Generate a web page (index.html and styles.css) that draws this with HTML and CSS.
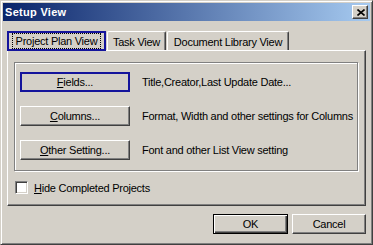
FILE: index.html
```html
<!DOCTYPE html>
<html>
<head>
<meta charset="utf-8">
<link rel="stylesheet" href="styles.css">
</head>
<body>
<div class="window">
  <div class="titlebar">
    <span class="title">Setup View</span>
    <div class="close"><svg width="8" height="7" viewBox="0 0 8 7"><path d="M0.5 0.5 L7.5 6.5 M7.5 0.5 L0.5 6.5" stroke="#000" stroke-width="1.6" fill="none"/></svg></div>
  </div>
  <div class="client">
    <div class="tabs">
      <div class="tab tab-active"><span class="focus">Project Plan View</span></div>
      <div class="tab tab-task">Task View</div>
      <div class="tab tab-doc">Document Library View</div>
    </div>
    <div class="panel">
      <div class="group">
        <div class="row"><div class="btn btn-focus"><u>F</u>ields...</div><span class="desc">Title,Creator,Last Update Date...</span></div>
        <div class="row"><div class="btn"><u>C</u>olumns...</div><span class="desc">Format, Width and other settings for Columns</span></div>
        <div class="row"><div class="btn"><u>O</u>ther Setting...</div><span class="desc">Font and other List View setting</span></div>
      </div>
      <div class="check"><span class="box"></span><span><u>H</u>ide Completed Projects</span></div>
    </div>
    <div class="actions">
      <div class="btn btn-default btn-ok">OK</div>
      <div class="btn btn-cancel">Cancel</div>
    </div>
  </div>
</div>
</body>
</html>
```
FILE: styles.css
```css
* { box-sizing: border-box; }
html, body { margin: 0; padding: 0; background: #d4d0c8; }
body { font-family: "Liberation Sans", Arial, sans-serif; font-size: 11px; letter-spacing: -0.25px; color: #000; }
u { text-decoration: underline; text-underline-offset: 1px; }

.window {
  width: 373px; height: 245px;
  background: #d4d0c8;
  border: 1px solid; border-color: #d4d0c8 #404040 #404040 #d4d0c8;
  box-shadow: inset 1px 1px 0 #fff, inset -1px -1px 0 #808080;
  padding: 2px;
  display: flex; flex-direction: column;
}

.titlebar {
  height: 18px;
  background: linear-gradient(to right, #0a246a, #a6caf0);
  display: flex; align-items: center; justify-content: space-between;
  padding: 0 2px 0 2px;
}
.title { color: #fff; font-weight: bold; font-size: 11px; letter-spacing: 0.3px; }
.close {
  width: 16px; height: 14px;
  background: #d4d0c8;
  border: 1px solid; border-color: #fff #404040 #404040 #fff;
  box-shadow: inset -1px -1px 0 #808080;
  display: flex; align-items: center; justify-content: center;
  padding-left: 1px;
}
.close svg { display: block; }

.client { flex: 1; display: flex; flex-direction: column; padding: 0 4px 0 4px; }

.tabs { display: flex; align-items: flex-end; height: 20px; margin-top: 9px; position: relative; z-index: 1; }
.tab {
  height: 19px;
  display: flex; align-items: center; justify-content: center;
  border-top: 1px solid #fff; border-left: 1px solid #fff; border-right: 1px solid #404040;
  box-shadow: inset -1px 0 0 #808080;
  border-radius: 2px 2px 0 0;
  padding-top: 1px;
}
.tab-active {
  width: 99px; height: 20px; margin-bottom: -1px;
  border: 2px solid #14149c; border-radius: 0;
  box-shadow: none; background: #d4d0c8;
  padding-top: 0;
}
.focus { outline: 1px dotted #000; outline-offset: 1px; padding: 0 2px; }
.tab-task { width: 59px; margin-left: 1px; }
.tab-doc { width: 122px; margin-left: 1px; }

.panel {
  height: 156px;
  border: 1px solid; border-color: #fff #404040 #404040 #fff;
  box-shadow: inset -1px -1px 0 #808080;
  padding: 11px 7px 0 6px;
  display: flex; flex-direction: column;
}

.group {
  height: 109px;
  border: 1px solid #808080;
  box-shadow: inset 1px 1px 0 #fff, 1px 1px 0 #fff;
  padding: 9px 0 0 5px;
  display: flex; flex-direction: column; gap: 14px;
}
.row { display: flex; align-items: center; height: 20px; }
.btn {
  flex: none;
  background: #d4d0c8;
  border: 1px solid; border-color: #fff #404040 #404040 #fff;
  box-shadow: inset -1px -1px 0 #808080;
  display: flex; align-items: center; justify-content: center;
  height: 20px;
}
.row .btn { width: 110px; }
.btn-focus { border: 2px solid #14149c; box-shadow: none; }
.desc { margin-left: 12px; white-space: nowrap; }

.check { display: flex; align-items: center; margin-top: 10px; margin-left: 1px; gap: 6px; }
.box {
  width: 13px; height: 13px; background: #fff;
  border: 1px solid; border-color: #808080 #fff #fff #808080;
  box-shadow: inset 1px 1px 0 #404040, inset -1px -1px 0 #d4d0c8;
}

.actions { display: flex; justify-content: flex-end; gap: 4px; margin-top: 8px; }
.btn-ok { width: 75px; }
.btn-cancel { width: 74px; }
.btn-default {
  border: 1px solid #000;
  box-shadow: inset 1px 1px 0 #fff, inset -1px -1px 0 #404040, inset -2px -2px 0 #808080;
}
```
